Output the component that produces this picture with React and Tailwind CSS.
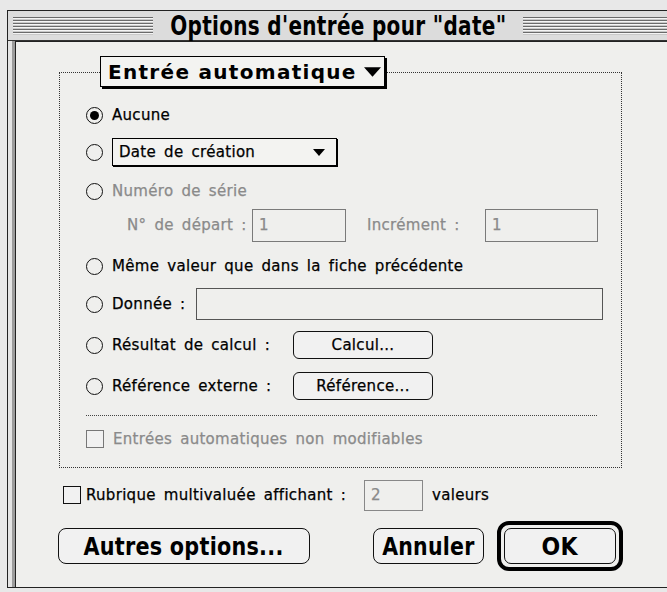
import React from "react";

const Tri = ({ w = 14, h = 8 }) => (
  <svg width={w} height={h} viewBox="0 0 14 8" className="shrink-0">
    <polygon points="0,0 14,0 7,8" fill="#000" />
  </svg>
);

function Radio({ checked }) {
  return (
    <span className="flex h-[17px] w-[17px] shrink-0 items-center justify-center rounded-full border-[1.5px] border-[#111]">
      {checked && <span className="h-[9px] w-[9px] rounded-full bg-black" />}
    </span>
  );
}

function Check({ gray }) {
  return (
    <span
      className={`block h-[18px] w-[18px] shrink-0 border ${gray ? "border-[#777]" : "border-[#111]"} bg-[#f1f1f1]`}
    />
  );
}

const Stripes = ({ className }) => (
  <div
    className={`h-[18px] bg-[repeating-linear-gradient(to_bottom,#6a6a6a_0px,#6a6a6a_1px,#f4f4f4_1px,#f4f4f4_2px,#c9c9c9_2px,#c9c9c9_3px)] ${className}`}
  />
);

// narrow heavy face used for the title and the push buttons
const Narrow = ({ children, s = "scale-x-[0.84]" }) => (
  <span className={`inline-block whitespace-nowrap font-bold ${s}`}>{children}</span>
);

function RoundButton({ children, className }) {
  return (
    <div
      className={`flex h-[28px] items-center justify-center rounded-[6px] border border-[#111] bg-[#f1f1f1] ${className}`}
    >
      {children}
    </div>
  );
}

export default function App() {
  return (
    <div className="h-[592px] w-[667px] overflow-hidden bg-[#e8e8e8] pl-[7px] pt-[10px] font-['DejaVu_Sans',Verdana,sans-serif] text-black">
      <div className="flex h-[578px] w-[664px] flex-col border border-[#222] bg-[#dcdcdc]">
        {/* title bar */}
        <div className="flex h-[30px] shrink-0 items-center border-b border-[#333] pl-[5px]">
          <Stripes className="w-[140px]" />
          <div className="flex w-[370px] justify-center text-[26px] leading-none tracking-[0.4px]">
            <Narrow s="scale-x-[0.77]">Options d'entrée pour "date"</Narrow>
          </div>
          <Stripes className="flex-1" />
        </div>

        {/* body frame */}
        <div className="flex-1 bg-[#e4e4e4] pl-[4px]">
          <div className="h-full border-l-[3px] border-[#9c9c9c]">
            <div className="h-full border-l border-t border-[#222] bg-[#efefed] pl-[43px] pt-[30px] text-[15px] tracking-[0.3px] [word-spacing:3px] [-webkit-text-stroke:0.25px]">
              {/* group */}
              <div className="flex w-[563px] flex-col border border-dotted border-[#333] pl-[26px]">
                <div className="-mt-[17px] ml-[14px] flex h-[31px] w-[285px] items-center gap-[7px] border border-black bg-[#f3f3f1] pl-[7px] shadow-[2px_2px_0_#000]">
                  <span className="text-[20px] font-bold leading-none tracking-[1.3px] [word-spacing:0px] [-webkit-text-stroke:0px]">Entrée automatique</span>
                  <Tri w={17} h={10} />
                </div>

                <div className="mt-[16px] flex h-[24px] items-center gap-[9px]">
                  <Radio checked />
                  <span>Aucune</span>
                </div>

                <div className="mt-[11px] flex h-[28px] items-center gap-[9px]">
                  <Radio />
                  <div className="flex h-[28px] w-[225px] items-center justify-between border border-black bg-[#f3f3f1] pl-[6px] pr-[11px] shadow-[1px_1px_0_#000]">
                    <span>Date de création</span>
                    <Tri w={12} h={7} />
                  </div>
                </div>

                <div className="mt-[13px] flex h-[24px] items-center gap-[9px]">
                  <Radio />
                  <span className="text-[#8a8a8a]">Numéro de série</span>
                </div>

                <div className="mt-[6px] flex h-[33px] items-center pl-[41px] text-[#8a8a8a]">
                  <span className="w-[125px] whitespace-nowrap">N° de départ :</span>
                  <div className="flex h-[33px] w-[94px] items-center border border-[#7a7a7a] pl-[6px]">1</div>
                  <span className="ml-[21px] w-[118px] whitespace-nowrap">Incrément :</span>
                  <div className="flex h-[33px] w-[113px] items-center border border-[#7a7a7a] pl-[6px]">1</div>
                </div>

                <div className="mt-[12px] flex h-[24px] items-center gap-[9px]">
                  <Radio />
                  <span>Même valeur que dans la fiche précédente</span>
                </div>

                <div className="mt-[10px] flex h-[32px] items-center gap-[9px]">
                  <Radio />
                  <span className="w-[75px] whitespace-nowrap">Donnée :</span>
                  <div className="h-[32px] w-[407px] border border-[#555]" />
                </div>

                <div className="mt-[11px] flex h-[28px] items-center gap-[9px]">
                  <Radio />
                  <span className="w-[172px] whitespace-nowrap">Résultat de calcul :</span>
                  <RoundButton className="w-[140px]">Calcul...</RoundButton>
                </div>

                <div className="mt-[13px] flex h-[28px] items-center gap-[9px]">
                  <Radio />
                  <span className="w-[172px] whitespace-nowrap">Référence externe :</span>
                  <RoundButton className="w-[140px]">Référence...</RoundButton>
                </div>

                <div className="mt-[15px] w-[511px] border-t border-dotted border-[#444]" />

                <div className="mt-[11px] flex h-[24px] items-center gap-[9px]">
                  <Check gray />
                  <span className="text-[#8a8a8a]">Entrées automatiques non modifiables</span>
                </div>
                <div className="h-[16px]" />
              </div>

              {/* multivalued row */}
              <div className="ml-[4px] mt-[12px] flex h-[30px] items-center">
                <Check />
                <span className="ml-[5px] w-[278px] whitespace-nowrap">Rubrique multivaluée affichant :</span>
                <div className="flex h-[31px] w-[59px] items-center border border-[#888] pl-[6px] text-[#8a8a8a]">
                  2
                </div>
                <span className="ml-[9px]">valeurs</span>
              </div>

              {/* buttons */}
              <div className="-ml-[1px] mt-[11px] flex h-[50px] items-center text-[25px] leading-none tracking-[0.3px] [word-spacing:0px] [-webkit-text-stroke:0px]">
                <div className="flex h-[36px] w-[252px] items-center justify-center rounded-[8px] border-[1.5px] border-[#111] bg-[#f1f1f1]">
                  <Narrow s="scale-x-[0.83]">Autres options...</Narrow>
                </div>
                <div className="ml-[63px] flex h-[36px] w-[111px] items-center justify-center rounded-[8px] border-[1.5px] border-[#111] bg-[#f1f1f1]">
                  <Narrow s="scale-x-[0.82]">Annuler</Narrow>
                </div>
                <div className="ml-[13px] flex h-[50px] w-[126px] items-center justify-center rounded-[12px] border-[4px] border-black p-[3px]">
                  <div className="flex h-full w-full items-center justify-center rounded-[7px] border-[1.5px] border-[#111] bg-[#f1f1f1]">
                    <Narrow s="scale-x-[0.88]">OK</Narrow>
                  </div>
                </div>
              </div>
            </div>
          </div>
        </div>
      </div>
    </div>
  );
}
